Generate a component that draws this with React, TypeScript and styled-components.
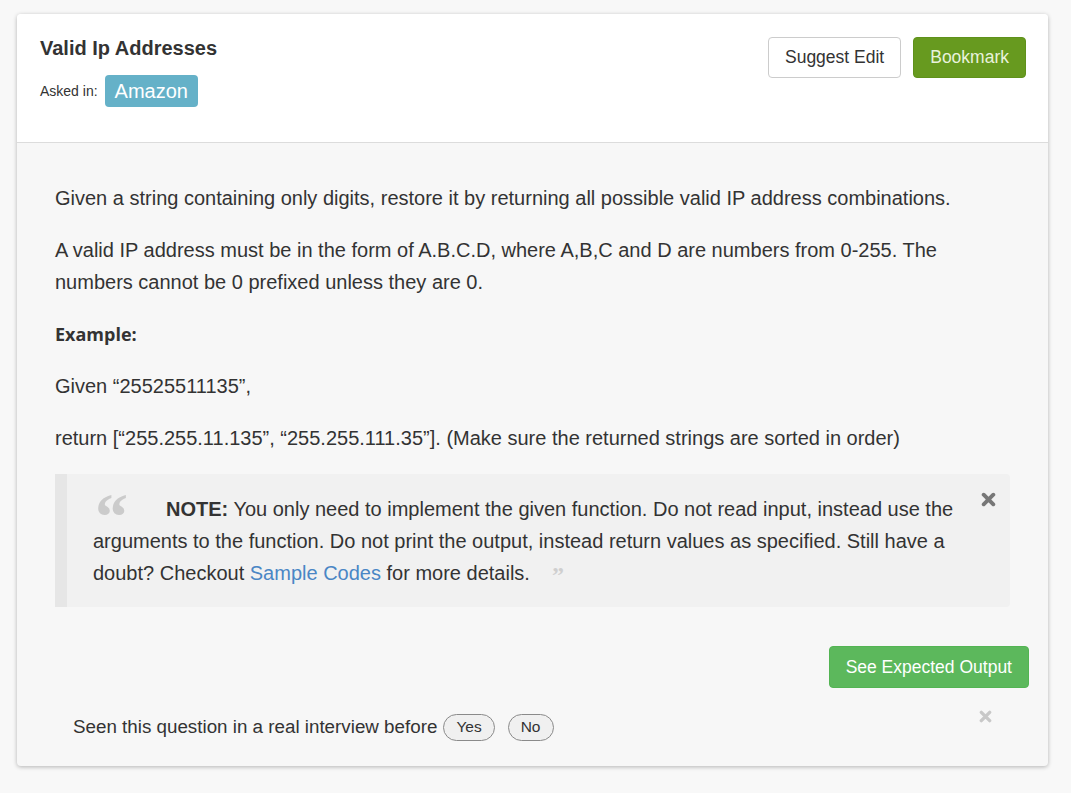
import styled, { createGlobalStyle } from 'styled-components';

const GlobalStyle = createGlobalStyle`
  html, body {
    margin: 0;
    padding: 0;
    background: #f8f8f8;
  }
  body {
    font-family: 'Liberation Sans', Arial, sans-serif;
    color: #333;
  }
`;

const Page = styled.div`
  padding: 14px 23px 26px 17px;
`;

const Card = styled.div`
  background: #f7f7f7;
  border-radius: 4px;
  box-shadow: 0 1px 4px rgba(0, 0, 0, 0.28);
  overflow: hidden;
`;

const Header = styled.div`
  background: #fff;
  border-bottom: 1px solid #dcdcdc;
  height: 129px;
  box-sizing: border-box;
  padding: 23px 22px 0 23px;
  display: flex;
  justify-content: space-between;
  align-items: flex-start;
`;

const TitleBlock = styled.div`
  display: flex;
  flex-direction: column;
`;

const Title = styled.h1`
  margin: 0;
  font-size: 20px;
  line-height: 22px;
  font-weight: bold;
  color: #333;
`;

const AskedRow = styled.div`
  display: flex;
  align-items: center;
  gap: 7px;
  margin-top: 16px;
  font-size: 14px;
`;

const CompanyTag = styled.span`
  display: inline-flex;
  align-items: center;
  height: 32px;
  padding: 0 10px;
  border-radius: 4px;
  background: #65b1c8;
  color: #fff;
  font-size: 20px;
`;

const Actions = styled.div`
  display: flex;
  gap: 12px;
  margin-top: 0;
`;

const Button = styled.button<{ $variant: 'default' | 'bookmark' | 'success' }>`
  font-family: 'Liberation Sans', Arial, sans-serif;
  height: ${(p) => (p.$variant === 'success' ? '42px' : '41px')};
  padding: 0 16px;
  border-radius: 4px;
  font-size: 17.5px;
  cursor: pointer;
  border: 1px solid
    ${(p) =>
      p.$variant === 'default' ? '#ccc' : p.$variant === 'bookmark' ? '#5f911b' : '#53b453'};
  background: ${(p) =>
    p.$variant === 'default' ? '#fff' : p.$variant === 'bookmark' ? '#679a1f' : '#5cb85c'};
  color: ${(p) =>
    p.$variant === 'default' ? '#333' : p.$variant === 'bookmark' ? '#e9f2dc' : '#fff'};
`;

const Body = styled.div`
  padding: 39px 38px 0 38px;
`;

const Para = styled.p`
  margin: 0 0 20px 0;
  font-size: 20px;
  line-height: 32px;
  color: #333;
`;

const ExampleLabel = styled.p`
  margin: 0 0 20px 0;
  font-family: 'Open Sans', 'Noto Sans', sans-serif;
  font-weight: bold;
  font-size: 18px;
  line-height: 32px;
  color: #333;
`;

const Note = styled.div`
  position: relative;
  margin-top: 20px;
  background: #f1f1f1;
  border-left: 12px solid #e6e6e6;
  border-radius: 0 4px 4px 0;
  padding: 19px 50px 16px 26px;
  font-size: 20px;
  line-height: 32px;
  color: #333;
`;

const OpenQuote = styled.span`
  display: inline-block;
  width: 73px;
  height: 32px;
  line-height: 0;
  vertical-align: top;
  font-family: 'Liberation Serif', 'Times New Roman', serif;
  font-weight: bold;
  font-size: 66px;
  color: #cbcbcb;
  transform: translate(2px, 24px);
`;

const CloseQuote = styled.span`
  font-family: 'Liberation Serif', 'Times New Roman', serif;
  font-weight: bold;
  font-size: 24px;
  color: #cfcfcf;
  margin-left: 22px;
  vertical-align: -3px;
`;

const Link = styled.a`
  color: #4a86c5;
  text-decoration: none;
`;

const CloseIcon = styled.button<{ $tone: string; $top: number; $right: number }>`
  position: absolute;
  top: ${(p) => p.$top}px;
  right: ${(p) => p.$right}px;
  padding: 0;
  border: 0;
  background: none;
  color: ${(p) => p.$tone};
  display: flex;
  cursor: pointer;
`;

const OutputRow = styled.div`
  display: flex;
  justify-content: flex-end;
  margin: 39px -19px 0 0;
`;

const Feedback = styled.div`
  position: relative;
  display: flex;
  align-items: center;
  gap: 13px;
  margin: 25px 0 0 18px;
  padding-bottom: 25px;
  font-size: 18.8px;
  line-height: 28px;
`;

const FeedbackText = styled.span`
  margin-right: -7px;
`;

const Pill = styled.button`
  font-family: 'Liberation Sans', Arial, sans-serif;
  height: 27px;
  padding: 0 12px;
  border: 1px solid #8a8a8a;
  border-radius: 14px;
  background: #f0f0f0;
  color: #333;
  font-size: 15.5px;
  cursor: pointer;
`;

const Cross = ({ size }: { size: number }) => (
  <svg width={size} height={size} viewBox="0 0 14 14">
    <path
      d="M2.5 2.5 L11.5 11.5 M11.5 2.5 L2.5 11.5"
      stroke="currentColor"
      strokeWidth="3.6"
      strokeLinecap="round"
    />
  </svg>
);

export default function App() {
  return (
    <>
      <GlobalStyle />
      <Page>
        <Card>
          <Header>
            <TitleBlock>
              <Title>Valid Ip Addresses</Title>
              <AskedRow>
                Asked in:
                <CompanyTag>Amazon</CompanyTag>
              </AskedRow>
            </TitleBlock>
            <Actions>
              <Button $variant="default">Suggest Edit</Button>
              <Button $variant="bookmark">Bookmark</Button>
            </Actions>
          </Header>
          <Body>
            <Para>
              Given a string containing only digits, restore it by returning all possible valid IP
              address combinations.
            </Para>
            <Para>
              A valid IP address must be in the form of A.B.C.D, where A,B,C and D are numbers from
              0-255. The numbers cannot be 0 prefixed unless they are 0.
            </Para>
            <ExampleLabel>Example:</ExampleLabel>
            <Para>Given “25525511135”,</Para>
            <Para style={{ marginBottom: 0 }}>
              return [“255.255.11.135”, “255.255.111.35”]. (Make sure the returned strings are
              sorted in order)
            </Para>
            <Note>
              <OpenQuote>“</OpenQuote>
              <b>NOTE:</b> You only need to implement the given function. Do not read input, instead
              use the arguments to the function. Do not print the output, instead return values as
              specified. Still have a doubt? Checkout <Link href="#">Sample Codes</Link> for more
              details.
              <CloseQuote>”</CloseQuote>
              <CloseIcon $tone="#777" $top={18} $right={14}>
                <Cross size={15} />
              </CloseIcon>
            </Note>
            <OutputRow>
              <Button $variant="success">See Expected Output</Button>
            </OutputRow>
            <Feedback>
              <FeedbackText>Seen this question in a real interview before</FeedbackText>
              <Pill>Yes</Pill>
              <Pill>No</Pill>
              <CloseIcon $tone="#c8c8c8" $top={-3} $right={18}>
                <Cross size={13} />
              </CloseIcon>
            </Feedback>
          </Body>
        </Card>
      </Page>
    </>
  );
}
